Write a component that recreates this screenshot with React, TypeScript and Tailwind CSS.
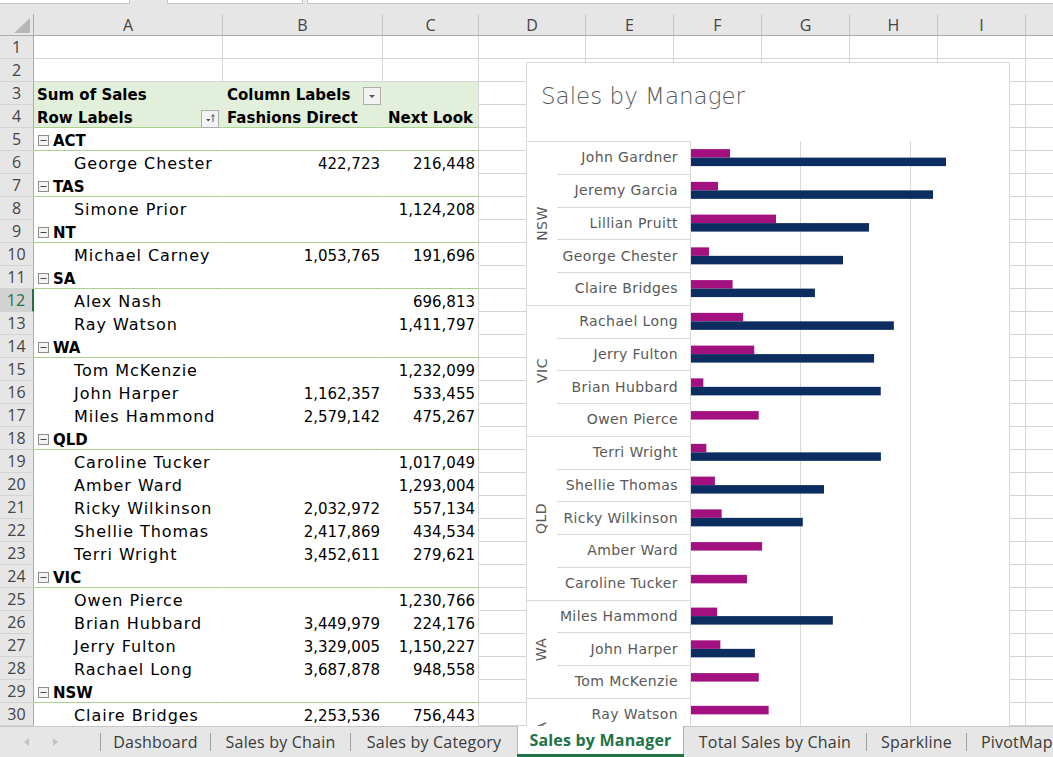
import React from "react";

type Row =
  | { kind: "empty" }
  | { kind: "h3" }
  | { kind: "h4" }
  | { kind: "region"; name: string }
  | { kind: "item"; name: string; fd?: string; nl?: string };

const rows: Row[] = [
  { kind: "empty" },
  { kind: "empty" },
  { kind: "h3" },
  { kind: "h4" },
  { kind: "region", name: "ACT" },
  { kind: "item", name: "George Chester", fd: "422,723", nl: "216,448" },
  { kind: "region", name: "TAS" },
  { kind: "item", name: "Simone Prior", nl: "1,124,208" },
  { kind: "region", name: "NT" },
  { kind: "item", name: "Michael Carney", fd: "1,053,765", nl: "191,696" },
  { kind: "region", name: "SA" },
  { kind: "item", name: "Alex Nash", nl: "696,813" },
  { kind: "item", name: "Ray Watson", nl: "1,411,797" },
  { kind: "region", name: "WA" },
  { kind: "item", name: "Tom McKenzie", nl: "1,232,099" },
  { kind: "item", name: "John Harper", fd: "1,162,357", nl: "533,455" },
  { kind: "item", name: "Miles Hammond", fd: "2,579,142", nl: "475,267" },
  { kind: "region", name: "QLD" },
  { kind: "item", name: "Caroline Tucker", nl: "1,017,049" },
  { kind: "item", name: "Amber Ward", nl: "1,293,004" },
  { kind: "item", name: "Ricky Wilkinson", fd: "2,032,972", nl: "557,134" },
  { kind: "item", name: "Shellie Thomas", fd: "2,417,869", nl: "434,534" },
  { kind: "item", name: "Terri Wright", fd: "3,452,611", nl: "279,621" },
  { kind: "region", name: "VIC" },
  { kind: "item", name: "Owen Pierce", nl: "1,230,766" },
  { kind: "item", name: "Brian Hubbard", fd: "3,449,979", nl: "224,176" },
  { kind: "item", name: "Jerry Fulton", fd: "3,329,005", nl: "1,150,227" },
  { kind: "item", name: "Rachael Long", fd: "3,687,878", nl: "948,558" },
  { kind: "region", name: "NSW" },
  { kind: "item", name: "Claire Bridges", fd: "2,253,536", nl: "756,443" },
];

const otherCols = ["w-[107px]", "w-[88px]", "w-[88px]", "w-[88px]", "w-[88px]", "w-[88px]"];
const letters = ["A", "B", "C", "D", "E", "F", "G", "H", "I"];
const headerW = ["w-[189px]", "w-[160px]", "w-[96px]", "w-[107px]", "w-[88px]", "w-[88px]", "w-[88px]", "w-[88px]", "w-[88px]"];

const DEJA = "font-['DejaVu_Sans',sans-serif]";
const OPEN = "font-['Open_Sans',sans-serif]";

function MinusBox() {
  return (
    <svg width="11" height="11" viewBox="0 0 11 11" className="shrink-0 mb-[3px]">
      <rect x="0.5" y="0.5" width="10" height="10" fill="#f4f4f4" stroke="#8c8c8c" />
      <line x1="2.5" y1="5.5" x2="8.5" y2="5.5" stroke="#444" strokeWidth="1" />
    </svg>
  );
}

function DropBtn({ sort }: { sort?: boolean }) {
  return (
    <svg width="18" height="18" viewBox="0 0 18 18" className="shrink-0">
      <rect x="0.5" y="0.5" width="17" height="17" fill="#f3f3f3" stroke="#adadad" />
      {sort ? (
        <>
          <path d="M5 9 L9.5 9 L7.25 11.5 Z" fill="#555" />
          <line x1="12" y1="5" x2="12" y2="12" stroke="#555" strokeWidth="1" />
          <path d="M10.5 6.5 L12 4.5 L13.5 6.5" fill="none" stroke="#555" strokeWidth="1" />
        </>
      ) : (
        <path d="M6 8 L12 8 L9 11 Z" fill="#555" />
      )}
    </svg>
  );
}

function SheetRow({ row, n }: { row: Row; n: number }) {
  const selected = n === 12;
  const isPivot = row.kind !== "empty";
  const green = row.kind === "h3" || row.kind === "h4";
  const bottomBorder =
    row.kind === "empty"
      ? "border-[#d4d4d4]"
      : row.kind === "h4" || row.kind === "region"
      ? "border-b-[#a9d08e]"
      : row.kind === "h3"
      ? "border-b-[#e2efda]"
      : "border-b-transparent";
  const bg = green ? "bg-[#e2efda]" : "";
  const rightAB = isPivot ? "border-r-transparent" : "border-r-[#d4d4d4]";

  let a: React.ReactNode = null;
  let b: React.ReactNode = null;
  let c: React.ReactNode = null;
  if (row.kind === "h3") {
    a = <span className={`${DEJA} font-bold text-[15px] leading-none pl-[3px] pb-[1px]`}>Sum of Sales</span>;
    b = (
      <div className="flex w-full items-end justify-between pb-[1px]">
        <span className={`${DEJA} font-bold text-[15px] leading-none pl-[4px]`}>Column Labels</span>
        <span className="mr-[1px] mb-[-2px]"><DropBtn /></span>
      </div>
    );
  } else if (row.kind === "h4") {
    a = (
      <div className="flex w-full items-end justify-between pb-[1px]">
        <span className={`${DEJA} font-bold text-[15px] leading-none pl-[3px]`}>Row Labels</span>
        <span className="mr-[3px] mb-[-2px]"><DropBtn sort /></span>
      </div>
    );
    b = <span className={`${DEJA} font-bold text-[15px] leading-none pl-[4px] pb-[1px]`}>Fashions Direct</span>;
    c = <span className={`${DEJA} font-bold text-[15px] leading-none pl-[5px] pb-[1px]`}>Next Look</span>;
  } else if (row.kind === "region") {
    a = (
      <div className="flex items-end gap-[4px] pl-[4px] pb-[1px]">
        <MinusBox />
        <span className={`${DEJA} font-bold text-[15px] leading-none`}>{row.name}</span>
      </div>
    );
  } else if (row.kind === "item") {
    a = <span className={`${DEJA} text-[16px] tracking-[0.95px] leading-none pl-[40px] pb-[1px] whitespace-nowrap`}>{row.name}</span>;
    if (row.fd) b = <span className={`${DEJA} text-[15px] leading-none w-full text-right pr-[2px] pb-[1px]`}>{row.fd}</span>;
    if (row.nl) c = <span className={`${DEJA} text-[15px] leading-none w-full text-right pr-[3px] pb-[1px]`}>{row.nl}</span>;
  }

  return (
    <div className="flex h-[23px] shrink-0">
      <div
        className={`w-[34px] shrink-0 flex items-center justify-center border-b border-[#d4d4d4] text-[16px] ${OPEN} ${
          selected
            ? "bg-[#d2d2d2] text-[#217346] border-r-2 border-r-[#217346]"
            : "bg-[#e6e6e6] text-[#444] border-r border-r-[#ababab]"
        }`}
      >
        {n}
      </div>
      <div className={`w-[189px] shrink-0 flex items-end border-b border-r ${bottomBorder} ${rightAB} ${bg} text-black`}>{a}</div>
      <div className={`w-[160px] shrink-0 flex items-end border-b border-r ${bottomBorder} ${rightAB} ${bg} text-black`}>{b}</div>
      <div className={`w-[96px] shrink-0 flex items-end border-b border-r ${bottomBorder} border-r-[#d4d4d4] ${bg} text-black`}>{c}</div>
      {otherCols.map((w, i) => (
        <div key={i} className={`${w} shrink-0 border-b border-r border-[#d4d4d4]`} />
      ))}
      <div className="flex-1 border-b border-[#d4d4d4]" />
    </div>
  );
}

type ChartItem = [string, number, number];
const groups: { label: string; items: ChartItem[] }[] = [
  {
    label: "NSW",
    items: [
      ["John Gardner", 709000, 4636000],
      ["Jeremy Garcia", 491000, 4400000],
      ["Lillian Pruitt", 1545000, 3236000],
      ["George Chester", 327000, 2764000],
      ["Claire Bridges", 756443, 2253536],
    ],
  },
  {
    label: "VIC",
    items: [
      ["Rachael Long", 948558, 3687878],
      ["Jerry Fulton", 1150227, 3329005],
      ["Brian Hubbard", 224176, 3449979],
      ["Owen Pierce", 1230766, 0],
    ],
  },
  {
    label: "QLD",
    items: [
      ["Terri Wright", 279621, 3452611],
      ["Shellie Thomas", 434534, 2417869],
      ["Ricky Wilkinson", 557134, 2032972],
      ["Amber Ward", 1293004, 0],
      ["Caroline Tucker", 1017049, 0],
    ],
  },
  {
    label: "WA",
    items: [
      ["Miles Hammond", 475267, 2579142],
      ["John Harper", 533455, 1162357],
      ["Tom McKenzie", 1232099, 0],
    ],
  },
  {
    label: "SA",
    items: [
      ["Ray Watson", 1411797, 0],
      ["Alex Nash", 696813, 0],
    ],
  },
];

const ROW_H = 32.75;
const SCALE = 55 / 1000000;

function Chart() {
  const flat = groups.flatMap((g) => g.items);
  const h = flat.length * ROW_H;
  return (
    <div className="absolute left-[526px] top-[26px] w-[484px] h-[760px] bg-white border border-[#d9d9d9] z-[5]">
      <div className={`h-[78px] pl-[14px] pt-[20px] text-[23px] leading-[26px] text-[#595959] ${DEJA} font-light whitespace-nowrap`}>
        Sales by Manager
      </div>
      <div className="flex">
        <div className="w-[164px] shrink-0">
          {groups.map((g) => (
            <div key={g.label} className="flex">
              <div className="w-[30px] shrink-0 border-t border-[#d9d9d9] flex items-center justify-center">
                <span className={`-rotate-90 whitespace-nowrap text-[14px] tracking-[0.5px] text-[#595959] ${DEJA}`}>
                  {g.label}
                </span>
              </div>
              <div className="w-[134px] shrink-0 border-r border-[#d9d9d9]">
                {g.items.map(([name]) => (
                  <div
                    key={name}
                    className={`h-[32.75px] border-t border-[#d9d9d9] flex items-center justify-end pr-[12px] text-[14px] tracking-[0.4px] text-[#595959] ${DEJA} whitespace-nowrap`}
                  >
                    {name}
                  </div>
                ))}
              </div>
            </div>
          ))}
        </div>
        <svg width="318" height={h} className="block shrink-0">
          <line x1="109.5" y1="0" x2="109.5" y2={h} stroke="#d9d9d9" strokeWidth="1" />
          <line x1="219.5" y1="0" x2="219.5" y2={h} stroke="#d9d9d9" strokeWidth="1" />
          {flat.map(([name, nl, fd], i) => {
            const cy = i * ROW_H + 16.6;
            return (
              <g key={name}>
                <rect x="0" y={cy - 8.5} width={nl * SCALE} height="8.5" fill="#a2117f" />
                {fd > 0 && <rect x="0" y={cy} width={fd * SCALE} height="8.5" fill="#0c2d5f" />}
              </g>
            );
          })}
        </svg>
      </div>
    </div>
  );
}

function TabSep() {
  return <span className="w-px h-[18px] bg-[#a0a0a0] self-center shrink-0" />;
}

const TAB_TEXT = `text-[16px] tracking-[0.2px] text-[#3a3a3a] ${OPEN} whitespace-nowrap`;

export default function App() {
  return (
    <div className="w-[1053px] h-[757px] overflow-hidden bg-white flex flex-col select-none">
      {/* formula bar remnant */}
      <div className="h-[14px] shrink-0 bg-[#e6e6e6] relative flex">
        <div className="w-[130px] h-[4px] bg-white border-b border-r border-[#c6c6c6]" />
        <div className="w-[37px]" />
        <div className="w-[136px] h-[4px] bg-white border border-t-0 border-[#c6c6c6]" />
        <div className="w-[4px]" />
        <div className="flex-1 h-[4px] bg-white border-b border-l border-[#c6c6c6]" />
      </div>
      {/* column header */}
      <div className="h-[22px] shrink-0 flex bg-[#e6e6e6] border-b border-[#ababab]">
        <div className="w-[34px] shrink-0 border-r border-[#ababab] relative">
          <svg width="34" height="21" className="absolute left-0 top-0">
            <path d="M14 19 L30 19 L30 4 Z" fill="#b7b7b7" />
          </svg>
        </div>
        {letters.map((l, i) => (
          <div
            key={l}
            className={`${headerW[i]} shrink-0 flex items-center justify-center border-r border-[#c6c6c6] text-[16px] text-[#444] ${OPEN}`}
          >
            {l}
          </div>
        ))}
        <div className="flex-1" />
      </div>
      {/* sheet body */}
      <div className="h-[690px] shrink-0 relative overflow-hidden">
        {rows.map((r, i) => (
          <SheetRow key={i} row={r} n={i + 1} />
        ))}
        <Chart />
      </div>
      {/* tab bar */}
      <div className="h-[31px] shrink-0 bg-[#e6e6e6] border-t border-[#c6c6c6] flex items-stretch relative z-10">
        <div className="w-[100px] shrink-0 flex items-center">
          <svg width="8" height="10" viewBox="0 0 8 10" className="ml-[22px]">
            <path d="M7 1 L2 5 L7 9 Z" fill="#c3c3c3" />
          </svg>
          <svg width="8" height="10" viewBox="0 0 8 10" className="ml-[22px]">
            <path d="M1 1 L6 5 L1 9 Z" fill="#c3c3c3" />
          </svg>
        </div>
        <TabSep />
        <div className={`w-[109px] shrink-0 flex items-center justify-center ${TAB_TEXT}`}>Dashboard</div>
        <TabSep />
        <div className={`w-[139px] shrink-0 flex items-center justify-center ${TAB_TEXT}`}>Sales by Chain</div>
        <TabSep />
        <div className={`w-[166px] shrink-0 flex items-center justify-center ${TAB_TEXT}`}>Sales by Category</div>
        <div className={`w-[167px] shrink-0 bg-white mt-[-1px] border-x border-[#b5b5b5] flex flex-col ${OPEN}`}>
          <div className="flex-1 flex items-center justify-center text-[16px] tracking-[0.2px] font-bold text-[#217346] whitespace-nowrap">
            Sales by Manager
          </div>
          <div className="h-[3px] bg-[#217346] mx-[-1px]" />
        </div>
        <div className={`w-[182px] shrink-0 flex items-center justify-center ${TAB_TEXT}`}>Total Sales by Chain</div>
        <TabSep />
        <div className={`w-[99px] shrink-0 flex items-center justify-center ${TAB_TEXT}`}>Sparkline</div>
        <TabSep />
        <div className={`flex-1 flex items-center pl-[14px] ${TAB_TEXT}`}>PivotMap</div>
      </div>
    </div>
  );
}
